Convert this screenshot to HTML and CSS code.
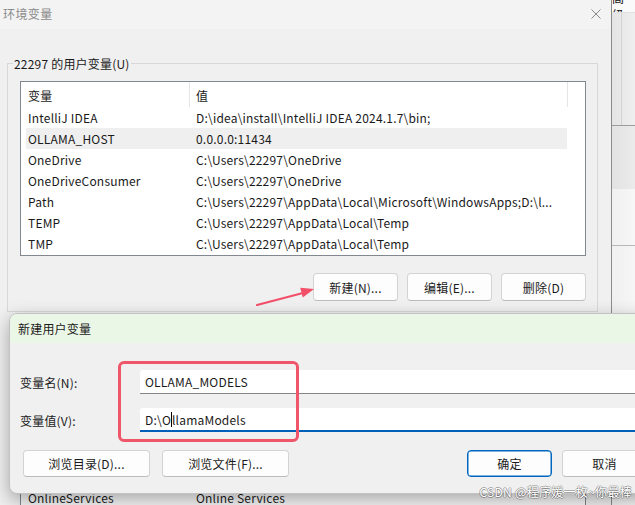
FILE: index.html
```html
<!DOCTYPE html>
<html lang="zh-CN">
<head>
<meta charset="utf-8">
<title>环境变量</title>
<link rel="stylesheet" href="styles.css">
</head>
<body>
<div class="desktop">
  <div class="backwin">
    <div class="bw-top"><span class="bw-tab">高级</span></div>
    <div class="bw-a"></div>
    <div class="bw-b"></div>
    <div class="bw-c"></div>
    <div class="bw-d"></div>
  </div>

  <div class="win">
    <div class="titlebar">
      <span class="title">环境变量</span>
      <svg class="close" viewBox="0 0 10 10" width="10" height="10"><path d="M0.5 0.5L9.5 9.5M9.5 0.5L0.5 9.5" stroke="#8a8a8a" stroke-width="1" fill="none"/></svg>
    </div>
    <div class="win-body">
      <fieldset class="group">
        <legend>22297 的用户变量(U)</legend>
        <div class="listbox">
          <div class="lv-head"><span class="h1">变量</span><span class="h2">值</span></div>
          <div class="lv-row"><span class="c1">IntelliJ IDEA</span><span class="c2">D:\idea\install\IntelliJ IDEA 2024.1.7\bin;</span></div>
          <div class="lv-row sel"><span class="c1">OLLAMA_HOST</span><span class="c2">0.0.0.0:11434</span></div>
          <div class="lv-row"><span class="c1">OneDrive</span><span class="c2">C:\Users\22297\OneDrive</span></div>
          <div class="lv-row"><span class="c1">OneDriveConsumer</span><span class="c2">C:\Users\22297\OneDrive</span></div>
          <div class="lv-row"><span class="c1">Path</span><span class="c2">C:\Users\22297\AppData\Local\Microsoft\WindowsApps;D:\l...</span></div>
          <div class="lv-row"><span class="c1">TEMP</span><span class="c2">C:\Users\22297\AppData\Local\Temp</span></div>
          <div class="lv-row"><span class="c1">TMP</span><span class="c2">C:\Users\22297\AppData\Local\Temp</span></div>
        </div>
        <div class="btn-row">
          <button class="btn">新建(N)...</button>
          <button class="btn">编辑(E)...</button>
          <button class="btn">删除(D)</button>
        </div>
      </fieldset>

      <div class="listbox sys">
        <div class="lv-row"><span class="c1">OnlineServices</span><span class="c2">Online Services</span></div>
      </div>
    </div>
  </div>

  <svg class="arrow" viewBox="0 0 70 30" width="70" height="30">
    <path d="M6 25 L51 13.2" stroke="#f24f68" stroke-width="2.2" stroke-linecap="round" fill="none"/>
    <polygon points="63,9 49.2,7.8 51.8,17.4" fill="#f24f68"/>
  </svg>

  <div class="dialog">
    <div class="dlg-title">新建用户变量</div>
    <div class="dlg-body">
      <div class="field"><span class="lbl">变量名(N):</span><div class="textbox">OLLAMA_MODELS</div></div>
      <div class="field"><span class="lbl">变量值(V):</span><div class="textbox focused">D:\O<span class="caret"></span>llamaModels</div></div>
      <div class="dlg-buttons">
        <button class="btn wide">浏览目录(D)...</button>
        <button class="btn wide">浏览文件(F)...</button>
        <button class="btn primary push">确定</button>
        <button class="btn">取消</button>
      </div>
    </div>
  </div>

  <div class="highlight"></div>
  <div class="watermark">CSDN @程序媛一枚~你最棒</div>
</div>
</body>
</html>
```

FILE: styles.css
```css
* { box-sizing: border-box; margin: 0; padding: 0; }
html, body { width: 635px; height: 505px; overflow: hidden; }
body {
  font-family: "Noto Sans CJK SC", "Noto Sans", sans-serif;
  font-size: 12px;
  letter-spacing: 0.2px;
  color: #1a1a1a;
  background: #f0f0f0;
}
.desktop { position: relative; width: 635px; height: 505px; overflow: hidden; }

/* window behind, on the right */
.backwin {
  position: absolute; left: 612px; top: 0; width: 23px; height: 505px;
  display: flex; flex-direction: column; background: #f3f3f3;
}
.bw-top { height: 13px; background: #fafafa; overflow: hidden; border-bottom: 1px solid #e0e0e0; }
.bw-tab { display: block; margin-top: -11px; font-size: 12px; color: #111; }
.bw-a {
  height: 113px; border-bottom: 1px solid #9c9c9c;
  background:
    linear-gradient(to right, transparent 9px, #d2d2d2 9px, #d2d2d2 10px, transparent 10px),
    linear-gradient(to right, #e4e4e4, #efefef);
}
.bw-b { height: 63px; background: linear-gradient(to right, #e2e2e2, #ebebeb); }
.bw-c { height: 57px; background: linear-gradient(to right, #f0f0f0, #f7f7f7); border-bottom: 1px solid #b8b8b8; }
.bw-d { flex: 1; background: linear-gradient(to right, #f0f0f0, #f6f6f6); }

/* main window */
.win {
  position: absolute; left: 0; top: 0; width: 612px; height: 505px;
  background: #f0f0f0; border-right: 1px solid #8c8c8c;
  display: flex; flex-direction: column;
}
.titlebar {
  height: 29px; flex: none; background: #f3f3f3;
  display: flex; align-items: center; justify-content: space-between;
  padding: 0 10px 3px 3px;
}
.title { color: #8a8a8a; letter-spacing: 0.4px; }
.close { display: block; margin-top: 2px; }

.win-body { padding-left: 7px; }
.group {
  width: 591px; border: 1px solid #d8d8d8;
  padding: 10px 11px 10px 12px; margin-top: 27px;
}
.group legend { margin-left: -7px; padding: 0 1px; line-height: 15px; }

.listbox { border: 1px solid #828790; background: #fff; height: 175px; overflow: hidden; }
.listbox.sys { width: 566px; margin: 174px 0 0 13px; height: 40px; border-bottom: 0; background: #f7f7f7; }
.lv-head { display: flex; height: 25px; }
.lv-head span { display: flex; align-items: center; height: 25px; padding-top: 2px; border-right: 1px solid #e5e5e5; }
.lv-head .h1 { width: 169px; padding-left: 7px; }
.lv-head .h2 { width: 378px; padding-left: 6px; }
.lv-row { display: flex; align-items: center; height: 21px; width: 541px; margin-left: 5px; white-space: nowrap; }
.lv-row.sel { background: #efefef; }
.lv-row .c1 { width: 163px; padding-left: 2px; }
.lv-row .c2 { padding-left: 7px; }

.btn-row { display: flex; justify-content: flex-end; gap: 9px; margin-top: 17px; }
.btn {
  font: inherit; color: #1a1a1a; letter-spacing: inherit;
  width: 85px; height: 28px;
  background: #fdfdfd; border: 1px solid #d3d3d3; border-bottom-color: #bcbcbc;
  border-radius: 4px;
}

/* modal dialog */
.dialog {
  position: absolute; left: 9px; top: 313px; width: 660px; height: 181px;
  background: #f0f0f0; border: 1px solid #c2c2c2; border-radius: 8px;
  box-shadow: 0 6px 18px rgba(0, 0, 0, 0.32);
  overflow: hidden; display: flex; flex-direction: column;
}
.dlg-title { flex: none; height: 29px; background: #ebf7e6; padding: 0 0 1px 8px; display: flex; align-items: center; }
.dlg-body { padding: 27px 21px 16px 10px; display: flex; flex-direction: column; gap: 14px; }
.field { display: grid; grid-template-columns: 120px 1fr; align-items: center; }
.textbox {
  height: 24px; background: #fff; border-bottom: 1px solid #868686;
  padding-left: 5px; display: flex; align-items: center; white-space: nowrap;
  border-radius: 3px 3px 0 0;
}
.textbox.focused { border-bottom: 2px solid #005fb8; padding-top: 1px; }
.caret { display: inline-block; width: 1px; height: 15px; background: #000; }
.dlg-buttons { display: flex; gap: 10px; margin-top: 4px; padding-left: 3px; }
.dlg-buttons .wide { width: 127px; }
.dlg-buttons .wide + .wide { margin-left: 2px; }
.btn.primary { border: 1px solid #0067c0; box-shadow: inset 0 0 0 0.5px #0067c0; }
.push { margin-left: auto; }
.dlg-buttons .btn { height: 27px; }

/* annotations */
.arrow { position: absolute; left: 251px; top: 280px; }
.highlight {
  position: absolute; left: 118px; top: 361px; width: 181px; height: 81px;
  border: 3px solid #f0566a; border-radius: 6px;
}
.watermark {
  position: absolute; right: 3px; bottom: 5px;
  font-size: 12px; letter-spacing: 0.3px; color: #ffffff;
  text-shadow:
    1px 0 0 rgba(0, 0, 0, 0.28), -1px 0 0 rgba(0, 0, 0, 0.28),
    0 1px 0 rgba(0, 0, 0, 0.28), 0 -1px 0 rgba(0, 0, 0, 0.28);
  white-space: nowrap;
}
```
